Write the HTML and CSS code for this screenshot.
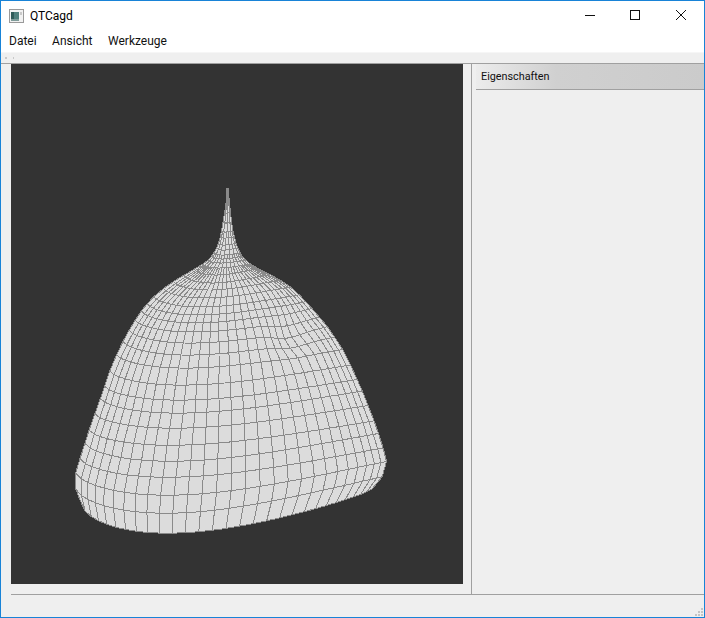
FILE: index.html
```html
<!DOCTYPE html>
<html lang="en">
<head>
  <meta charset="UTF-8">
  <title>QTCagd</title>
  <link rel="stylesheet" href="styles.css">
</head>
<body>
  <div class="window">
    <div class="titlebar">
      <svg class="app-icon" width="15" height="14" viewBox="0 0 15 14">
        <rect x="0.5" y="0.5" width="14" height="13" fill="#f2f2f2" stroke="#9a9a9a"/>
        <rect x="2" y="3" width="8" height="9" fill="#4f7f7c"/>
        <rect x="2" y="3" width="3" height="9" fill="#2f5a58"/>
        <rect x="2" y="10" width="8" height="2" fill="#7f9c9a"/>
        <rect x="11" y="3" width="2" height="3" fill="#c9c9c9"/>
      </svg>
      <span class="title">QTCagd</span>
      <div class="controls">
        <svg class="control" width="46" height="29" viewBox="0 0 46 29">
          <path d="M19 14.5h10" stroke="#111" fill="none"/>
        </svg>
        <svg class="control" width="46" height="29" viewBox="0 0 46 29">
          <rect x="18.5" y="9.5" width="9" height="9" stroke="#111" fill="none"/>
        </svg>
        <svg class="control" width="46" height="29" viewBox="0 0 46 29">
          <path d="M18 9l10 10M28 9l-10 10" stroke="#111" fill="none"/>
        </svg>
      </div>
    </div>

    <div class="menubar">
      <span class="menu-item">Datei</span>
      <span class="menu-item">Ansicht</span>
      <span class="menu-item">Werkzeuge</span>
    </div>

    <div class="toolbar">
      <span class="grip"></span>
      <span class="grip grip-small"></span>
    </div>

    <div class="main">
      <div class="viewport">
        <svg id="mesh" width="452" height="520" viewBox="11 64 452 520"></svg>
      </div>
      <div class="splitter"></div>
      <div class="panel">
        <div class="panel-header">Eigenschaften</div>
      </div>
    </div>

    <div class="statusbar">
      <svg class="size-grip" width="9" height="9" viewBox="0 0 9 9">
        <path d="M7 1h2v2H7zM4 4h2v2H4zM7 4h2v2H7zM1 7h2v2H1zM4 7h2v2H4zM7 7h2v2H7z" fill="#c4c4c4"/>
      </svg>
    </div>
  </div>

  <script src="mesh.js"></script>
</body>
</html>
```

FILE: styles.css
```css
/* Base Reset */
html, body {
  margin: 0;
  padding: 0;
}

body {
  font-family: 'Roboto', 'Noto Sans', sans-serif;
  font-size: 12px;
  color: #111;
}

/* Window frame */
.window {
  box-sizing: border-box;
  width: 705px;
  height: 618px;
  border: 1px solid #1883d7;
  background: #efefef;
  display: flex;
  flex-direction: column;
  overflow: hidden;
}

/* Title bar */
.titlebar {
  height: 29px;
  background: #fff;
  display: flex;
  align-items: center;
  flex-shrink: 0;
  padding-left: 8px;
}

.app-icon {
  margin-right: 6px;
}

.title {
  font-size: 12px;
  color: #000;
}

.controls {
  margin-left: auto;
  display: flex;
}

.control {
  display: block;
}

/* Menu */
.menubar {
  height: 22px;
  background: #fff;
  border-bottom: 1px solid #f6f6f6;
  display: flex;
  align-items: center;
  gap: 15.5px;
  flex-shrink: 0;
  padding-left: 8px;
}

.menu-item {
  color: #111;
}

/* Toolbar strip */
.toolbar {
  height: 10px;
  border-bottom: 1px solid #a0a0a0;
  display: flex;
  align-items: center;
  gap: 6px;
  flex-shrink: 0;
  padding-left: 4px;
}

.grip {
  width: 2px;
  height: 2px;
  background: #c8c8c8;
}

.grip-small {
  width: 1px;
}

/* Central area */
.main {
  flex: 1;
  display: flex;
  min-height: 0;
  padding-left: 10px;
}

.viewport {
  width: 452px;
  height: 520px;
  background: #333;
  flex-shrink: 0;
}

#mesh {
  display: block;
}

.splitter {
  width: 8px;
  border-right: 1px solid #a0a0a0;
  flex-shrink: 0;
}

.panel {
  flex: 1;
  padding-left: 4px;
}

.panel-header {
  height: 25px;
  line-height: 26px;
  padding-left: 5px;
  font-size: 10.8px;
  background: linear-gradient(to right, #ececec, #d0d0d0 35%, #cbcbcb);
  border-bottom: 1px solid #a0a0a0;
}

/* Status bar */
.statusbar {
  height: 22px;
  margin-left: 10px;
  border-top: 1px solid #a0a0a0;
  flex-shrink: 0;
  display: flex;
  justify-content: flex-end;
  align-items: flex-end;
}

.size-grip {
  display: block;
  margin: 0 1px 1px 0;
}
```

FILE: mesh.js
```js
// Silhouette of the surface, [y, x] pairs in page pixels
const LEFT = [[188,227],[200,226.5],[223,223],[243,219],[255,213],[263,206],[273,187],[288,163],[303,147],[323,133],[347,120],[370,110],[400,100],[427,90],[453,82],[473,75],[487,75],[500,80]];
const RIGHT = [[188,228],[227,232],[247,237],[258,243],[265,250],[273,267],[283,287],[302,307],[325,327],[353,345],[390,362],[423,375],[457,386],[465,388],[478,382],[489,372]];

// One ring per entry: [y at the lowest point, how far the ring sags, tilt if fixed]
const RINGS = [[188,0],[200,0],[213,0.5],[223,1],[232,1],[238,1],[245,1.5],[250,2],[255,2],[259,3],[263,3],[268,4],[275,6],[283,8],[290,9],[298,10],[307,11],[315,12],[323,13],[332,13],[343,14],[355,15],[368,15],[385,16],[400,16],[413,17],[428,17],[445,18],[461,21],[477,22],[495,26],[513,28],[533,36.7,5.5]];

const COLUMNS = 28;

function lookup(table, y) {
  if (y <= table[0][0]) return table[0][1];
  for (let i = 1; i < table.length; i++) {
    if (y <= table[i][0]) {
      const t = (y - table[i-1][0]) / (table[i][0] - table[i-1][0]);
      return table[i-1][1] + (table[i][1] - table[i-1][1]) * t;
    }
  }
  return table[table.length-1][1];
}

// Averages the table around y, less so on the spike and the rim
function smooth(table, y) {
  const d = Math.min(8, Math.max(0, (y - 200) * 0.1), Math.max(0, (490 - y) * 0.4));
  let sum = 0;
  for (let i = -4; i <= 4; i++) sum += lookup(table, y + d * i / 4);
  return sum / 9;
}

function point(ring, s) {
  const [low, sag, fixed] = ring;
  const tilt = fixed !== undefined ? fixed : Math.max(0, (low - sag - 260) / 200) * 5.5;
  const mid = low - sag - 0.32 * tilt;
  const ly = mid + tilt, ry = mid - tilt;
  const lx = smooth(LEFT, ly), rx = smooth(RIGHT, ry);

  // Rings lean to the left, the rim is a bit fuller
  const sine = Math.sin(Math.PI * Math.pow(s, 0.642));
  const shape = fixed !== undefined ? Math.pow(sine, 0.8) : sine;
  let x = lx + (rx - lx) * s;
  let y = ly + (ry - ly) * s + sag * shape;

  // Dent on the right shoulder
  const d2 = ((x - 292) ** 2 + (y - 333) ** 2) / (20 * 20);
  const g = Math.exp(-d2);
  x -= 5 * g;
  y += 6 * g;
  return [x, y];
}

function toPoints(list) {
  return list.map(p => p[0].toFixed(1) + ',' + p[1].toFixed(1)).join(' ');
}

function addShape(svg, tag, pts, fill, stroke) {
  const el = document.createElementNS('http://www.w3.org/2000/svg', tag);
  el.setAttribute('points', toPoints(pts));
  el.setAttribute('fill', fill);
  el.setAttribute('stroke', stroke);
  el.setAttribute('shape-rendering', 'crispEdges');
  svg.appendChild(el);
}

const svg = document.getElementById('mesh');
const grid = RINGS.map(ring => {
  const row = [];
  for (let c = 0; c <= COLUMNS; c++) {
    const v = c / COLUMNS;
    const s = 0.55 * (1 - Math.cos(Math.PI * v)) / 2 + 0.45 * v;
    row.push(point(ring, s));
  }
  return row;
});

// Outline first, then the lines on top
const outline = grid.map(r => r[0])
  .concat(grid[grid.length-1])
  .concat(grid.map(r => r[COLUMNS]).reverse());
addShape(svg, 'polygon', outline, '#dcdcdc', '#8a8a8a');

grid.forEach(row => addShape(svg, 'polyline', row, 'none', '#8a8a8a'));

// Thin out the columns where the rings get too short to hold them all
for (let c = 0; c <= COLUMNS; c++) {
  for (let r = 0; r < grid.length - 1; r++) {
    const width = grid[r + 1][COLUMNS][0] - grid[r + 1][0][0];
    const step = width < 14 ? 7 : width < 30 ? 4 : width < 60 ? 2 : 1;
    if (c % step === 0) addShape(svg, 'polyline', [grid[r][c], grid[r + 1][c]], 'none', '#8a8a8a');
  }
}
```
